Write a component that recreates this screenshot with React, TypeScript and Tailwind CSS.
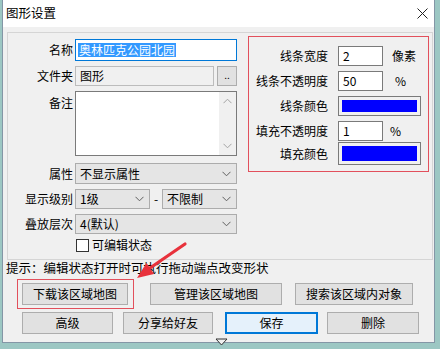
import React from "react";

const Chevron = ({ color = "#606060" }: { color?: string }) => (
  <svg width="9" height="6" viewBox="0 0 9 6" className="shrink-0">
    <polyline points="0.5,0.8 4.5,4.8 8.5,0.8" fill="none" stroke={color} strokeWidth="1" />
  </svg>
);

const Combo = ({ text, className = "" }: { text: string; className?: string }) => (
  <div
    className={`flex items-center justify-between bg-[#e5e5e5] border border-[#acacac] pl-[4px] pr-[5px] ${className}`}
  >
    <span className="leading-none">{text}</span>
    <Chevron />
  </div>
);

const Label = ({ text, top = false }: { text: string; top?: boolean }) => (
  <div className={`w-[65px] shrink-0 text-right leading-none ${top ? "self-start pt-[6px]" : ""}`}>{text}</div>
);

const TextBox = ({ value, className = "" }: { value: string; className?: string }) => (
  <div className={`flex items-center bg-white border border-[#7a7a7a] pl-[4px] leading-none ${className}`}>
    {value}
  </div>
);

const ColorBox = ({ className = "" }: { className?: string }) => (
  <div className={`w-[83px] border border-[#7a7a7a] bg-[#f0f0f0] p-[3px] ${className}`}>
    <div className="w-full h-full bg-[#0000ff]" />
  </div>
);

const Btn = ({ text, className = "" }: { text: string; className?: string }) => (
  <div
    className={`h-[22px] flex items-center justify-center bg-[#e1e1e1] border border-[#adadad] leading-none ${className}`}
  >
    {text}
  </div>
);

export default function App() {
  return (
    <div className="relative w-[440px] h-[349px] overflow-hidden bg-[#9cc7c3] text-[12px] text-black font-['Microsoft_YaHei','Noto_Sans_CJK_SC',sans-serif]">
      {/* WINDOW */}
      <div className="ml-[2px] w-[433px] h-[343px] border-x border-b border-[#8496a6] bg-[#f0f0f0] flex flex-col">
        {/* TITLE BAR */}
        <div className="h-[27px] shrink-0 bg-white flex items-center justify-between pl-[3px] pr-[6px]">
          <span className="text-[12.5px] leading-none">图形设置</span>
          <svg width="11" height="11" viewBox="0 0 11 11">
            <path d="M0.5 0.5 L10.5 10.5 M10.5 0.5 L0.5 10.5" stroke="#222" strokeWidth="1" />
          </svg>
        </div>

        {/* GROUP BOX */}
        <div className="ml-[4px] mt-[5px] w-[426px] h-[228px] shrink-0 border border-[#d5d5d5] flex items-start">
          {/* LEFT FORM */}
          <div className="w-[229px] pt-[6px] flex flex-col">
            <div className="h-[22px] flex items-center">
              <Label text="名称" />
              <div className="ml-[2px] w-[162px] h-[22px] bg-white border border-[#0078d7] flex items-center pl-[2px]">
                <span className="bg-[#3399ff] text-white leading-[14px] px-[1px]">奥林匹克公园北园</span>
              </div>
            </div>
            <div className="mt-[5px] h-[20px] flex items-center">
              <Label text="文件夹" />
              <div className="ml-[2px] w-[139px] h-[20px] bg-[#f0f0f0] border border-[#bcbcbc] flex items-center pl-[4px] leading-none">
                图形
              </div>
              <div className="ml-[3px] w-[20px] h-[20px] bg-[#e1e1e1] border border-[#adadad] flex items-center justify-center leading-none text-[10px] pb-[3px]">
                ..
              </div>
            </div>
            <div className="mt-[5px] h-[65px] flex items-start">
              <Label text="备注" top />
              <div className="ml-[2px] w-[162px] h-[65px] bg-white border border-[#7a7a7a] flex justify-end">
                <div className="w-[17px] h-full bg-[#f0f0f0] flex flex-col items-center justify-between py-[6px]">
                  <svg width="9" height="6" viewBox="0 0 9 6">
                    <polyline points="0.5,5.2 4.5,1.2 8.5,5.2" fill="none" stroke="#a3a3a3" strokeWidth="1" />
                  </svg>
                  <Chevron color="#a3a3a3" />
                </div>
              </div>
            </div>
            <div className="mt-[7px] h-[21px] flex items-center">
              <Label text="属性" />
              <Combo text="不显示属性" className="ml-[2px] w-[162px] h-[21px]" />
            </div>
            <div className="mt-[5px] h-[20px] flex items-center">
              <Label text="显示级别" />
              <Combo text="1级" className="ml-[2px] w-[75px] h-[20px]" />
              <span className="w-[12px] text-center leading-none">-</span>
              <Combo text="不限制" className="w-[75px] h-[20px]" />
            </div>
            <div className="mt-[5px] h-[20px] flex items-center">
              <Label text="叠放层次" />
              <Combo text="4(默认)" className="ml-[2px] w-[162px] h-[20px]" />
            </div>
            <div className="mt-[4px] h-[14px] flex items-center">
              <div className="ml-[68px] w-[13px] h-[13px] bg-white border border-[#333]" />
              <span className="ml-[3px] leading-none">可编辑状态</span>
            </div>
          </div>

          {/* STYLE BOX */}
          <div className="ml-[11px] mt-[3px] w-[181px] h-[136px] border border-[#e2505c] pt-[9px] flex flex-col">
            <div className="h-[20px] flex items-center">
              <span className="w-[79px] text-right leading-none">线条宽度</span>
              <TextBox value="2" className="ml-[10px] w-[45px] h-[20px]" />
              <span className="ml-[9px] leading-none">像素</span>
            </div>
            <div className="mt-[5px] h-[20px] flex items-center">
              <span className="w-[79px] text-right leading-none">线条不透明度</span>
              <TextBox value="50" className="ml-[10px] w-[45px] h-[20px]" />
              <span className="ml-[12px] leading-none">%</span>
            </div>
            <div className="mt-[5px] h-[20px] flex items-center">
              <span className="w-[79px] text-right leading-none">线条颜色</span>
              <ColorBox className="ml-[10px] h-[20px]" />
            </div>
            <div className="mt-[5px] h-[20px] flex items-center">
              <span className="w-[79px] text-right leading-none">填充不透明度</span>
              <TextBox value="1" className="ml-[10px] w-[45px] h-[20px]" />
              <span className="ml-[7px] leading-none">%</span>
            </div>
            <div className="mt-[1px] h-[23px] flex items-center">
              <span className="w-[79px] text-right leading-none">填充颜色</span>
              <ColorBox className="ml-[10px] h-[23px]" />
            </div>
          </div>
        </div>

        {/* HINT */}
        <div className="h-[17px] pl-[3px] flex items-center leading-none text-[12.5px]">
          提示：编辑状态打开时可执行拖动端点改变形状
        </div>

        {/* BUTTON ROW 1 */}
        <div className="mt-[6px] flex items-center">
          <Btn text="下载该区域地图" className="ml-[19px] w-[106px]" />
          <Btn text="管理该区域地图" className="ml-[22px] w-[132px]" />
          <Btn text="搜索该区域内对象" className="ml-[13px] w-[118px]" />
        </div>

        {/* BUTTON ROW 2 */}
        <div className="mt-[7px] flex items-center">
          <Btn text="高级" className="ml-[19px] w-[91px]" />
          <Btn text="分享给好友" className="ml-[10px] w-[90px]" />
          <div className="ml-[12px] w-[93px] h-[22px] flex items-center justify-center bg-[#e5f1fb] border-2 border-[#0078d7] leading-none">
            保存
          </div>
          <Btn text="删除" className="ml-[9px] w-[92px]" />
        </div>
      </div>

      {/* RED HIGHLIGHT BOX */}
      <div className="absolute left-[17px] top-[279px] w-[117px] h-[30px] border border-[#e2505c]" />

      {/* RED ARROW */}
      <svg className="absolute left-0 top-0" width="440" height="349" viewBox="0 0 440 349">
        <path d="M185 244 L150 268" stroke="#e8323c" strokeWidth="3.2" strokeLinecap="round" />
        <polygon points="137,278 146.5,263 154,274" fill="#e8323c" />
      </svg>

      {/* SMALL TRIANGLE */}
      <svg className="absolute left-[215px] top-[338px]" width="13" height="8" viewBox="0 0 13 8">
        <polygon points="1,1 12,1 6.5,7" fill="#f0f0f0" stroke="#333" strokeWidth="1" />
      </svg>
    </div>
  );
}
